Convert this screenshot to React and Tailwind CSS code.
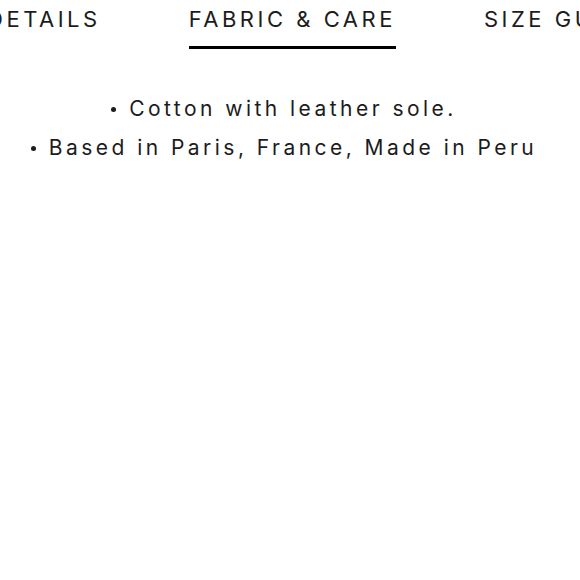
import { useState } from "react";

const tabs = ["DETAILS", "FABRIC & CARE", "SIZE GUIDE"];
const points = ["Cotton with leather sole.", "Based in Paris, France, Made in Peru"];

const App = () => {
  const [active, setActive] = useState(1);

  return (
    <div className="w-[580px] h-[580px] bg-white overflow-hidden text-[#1c1c1c] font-['Inter',sans-serif]">
      <div className="flex gap-[88px] -ml-[13px] whitespace-nowrap">
        {tabs.map((t, i) => (
          <button
            key={t}
            onClick={() => setActive(i)}
            className={`pt-[4px] pb-[12px] text-[22px] leading-[30px] tracking-[0.16em] border-b-[3px] ${
              i === active ? "border-black" : "border-transparent"
            }`}
          >
            {t}
          </button>
        ))}
      </div>

      <ul className="mt-[40px] pr-[12px] flex flex-col items-center text-[21px] leading-[39px] tracking-[0.165em]">
        {points.map((p) => (
          <li key={p} className="flex items-center">
            <span className="w-[5px] h-[5px] rounded-full bg-[#1c1c1c] mr-[13px] mt-[2px]" />
            {p}
          </li>
        ))}
      </ul>
    </div>
  );
};

export default App;
